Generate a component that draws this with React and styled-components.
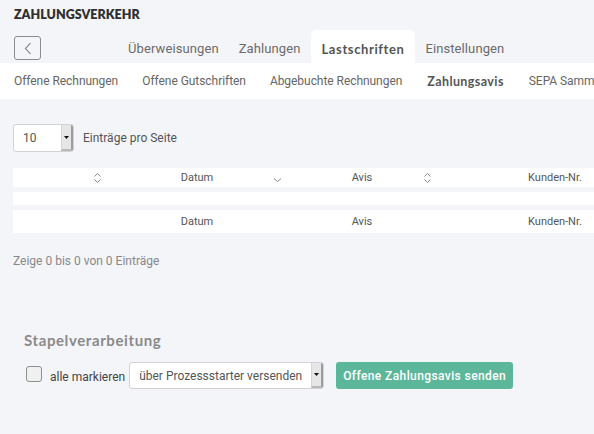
import React from 'react'
import styled, { createGlobalStyle } from 'styled-components'

const GlobalStyle = createGlobalStyle`
    html, body {
        margin: 0;
        padding: 0;
        background: #f4f5f9;
        font-family: Roboto, "Liberation Sans", sans-serif;
        overflow: hidden;
    }
`;

const topTabs = ['Überweisungen', 'Zahlungen', 'Lastschriften', 'Einstellungen'];
const subTabs = ['Offene Rechnungen', 'Offene Gutschriften', 'Abgebuchte Rechnungen', 'Zahlungsavis', 'SEPA Sammellastschriften'];

const columns = [
    { label: '', width: 97, sort: 'both' },
    { label: 'Datum', width: 180, sort: 'desc' },
    { label: 'Avis', width: 150, sort: 'both' },
    { label: 'Kunden-Nr.', width: 230, sort: null },
];

function SortIcon({ type }) {
    if (type === 'desc') {
        return (
            <svg width="9" height="6" viewBox="0 0 9 6" fill="none">
                <path d="M1 1.5L4.5 4.5L8 1.5" stroke="#8a8a8a" strokeWidth="1" />
            </svg>
        )
    }
    return (
        <svg width="9" height="12" viewBox="0 0 9 12" fill="none">
            <path d="M1.5 4.5L4.5 1.5L7.5 4.5" stroke="#8a8a8a" strokeWidth="1" />
            <path d="M1.5 7.5L4.5 10.5L7.5 7.5" stroke="#8a8a8a" strokeWidth="1" />
        </svg>
    )
}

function FakeSelect({ value, width }) {
    return (
        <SelectBox $width={width}>
            <SelectValue>{value}</SelectValue>
            <SelectArrow>
                <svg width="5" height="3" viewBox="0 0 5 3"><path d="M0 0H5L2.5 3Z" fill="#111" /></svg>
            </SelectArrow>
        </SelectBox>
    )
}

export default function App() {
    return (
        <Page>
            <GlobalStyle />
            <Header>
                <Title>ZAHLUNGSVERKEHR</Title>
                <TopRow>
                    <BackButton>
                        <svg width="8" height="13" viewBox="0 0 8 13" fill="none">
                            <path d="M6.5 1L1.5 6.5L6.5 12" stroke="#777" strokeWidth="1.1" />
                        </svg>
                    </BackButton>
                    <Tabs>
                        {topTabs.map(t => (
                            <Tab key={t} $active={t === 'Lastschriften'}>{t}</Tab>
                        ))}
                    </Tabs>
                </TopRow>
            </Header>

            <SubNav>
                {subTabs.map(t => (
                    <SubItem key={t} $active={t === 'Zahlungsavis'}>{t}</SubItem>
                ))}
            </SubNav>

            <Content>
                <LengthRow>
                    <FakeSelect value="10" width={61} />
                    <span>Einträge pro Seite</span>
                </LengthRow>

                <Table>
                    <Row $height={19}>
                        {columns.map((c, i) => (
                            <Cell key={i} $width={c.width} $sortable={!!c.sort}>
                                {c.label}
                                {c.sort && <SortSlot $low={c.sort === 'desc'}><SortIcon type={c.sort} /></SortSlot>}
                            </Cell>
                        ))}
                    </Row>
                    <Row $height={13} />
                    <Row $height={23}>
                        {columns.map((c, i) => (
                            <Cell key={i} $width={c.width} $sortable={!!c.sort}>{c.label}</Cell>
                        ))}
                    </Row>
                </Table>

                <Info>Zeige 0 bis 0 von 0 Einträge</Info>

                <Bulk>
                    <BulkTitle>Stapelverarbeitung</BulkTitle>
                    <BulkRow>
                        <CheckLabel>
                            <CheckBox />
                            alle markieren
                        </CheckLabel>
                        <FakeSelect value="über Prozessstarter versenden" width={195} />
                        <SendButton>Offene Zahlungsavis senden</SendButton>
                    </BulkRow>
                </Bulk>
            </Content>
        </Page>
    )
}

const Page = styled.div`
    width: 594px;
    height: 434px;
    overflow: hidden;
    background: #f4f5f9;
`;

const Header = styled.div`
    padding: 7px 0 0 14px;
`;

const Title = styled.div`
    font-family: Lato, "Open Sans", sans-serif;
    font-weight: 800;
    font-size: 12.5px;
    line-height: 16px;
    color: #2f2f2f;
`;

const TopRow = styled.div`
    display: flex;
    align-items: flex-end;
    height: 33px;
    margin-top: 7px;
`;

const BackButton = styled.div`
    width: 25px;
    height: 22px;
    border: 1px solid #8c8c8c;
    border-radius: 3px;
    display: flex;
    align-items: center;
    justify-content: center;
    align-self: center;
    margin-top: 3px;
    box-sizing: content-box;
`;

const Tabs = styled.div`
    display: flex;
    margin-left: 77px;
    height: 33px;
`;

const Tab = styled.div`
    display: flex;
    align-items: center;
    padding: ${p => p.$active ? '4px 11px 0 11px' : '4px 10px 0 10px'};
    font-family: ${p => p.$active ? 'Lato, "Open Sans", sans-serif' : 'Roboto, sans-serif'};
    font-size: 13px;
    font-weight: ${p => p.$active ? 700 : 400};
    letter-spacing: ${p => p.$active ? '0.6px' : '0.1px'};
    color: ${p => p.$active ? '#555' : '#6b6b6b'};
    background: ${p => p.$active ? '#fff' : 'transparent'};
    border-radius: 5px 5px 0 0;
    white-space: nowrap;
`;

const SubNav = styled.div`
    display: flex;
    align-items: center;
    gap: 24px;
    height: 36px;
    padding: 0 14px;
    background: #fff;
    white-space: nowrap;
    overflow: hidden;
`;

const SubItem = styled.div`
    font-family: ${p => p.$active ? 'Lato, "Open Sans", sans-serif' : 'Roboto, sans-serif'};
    font-size: ${p => p.$active ? '12.5px' : '12px'};
    font-weight: ${p => p.$active ? 700 : 400};
    letter-spacing: ${p => p.$active ? '0.4px' : '-0.05px'};
    margin: ${p => p.$active ? '0 1px' : '0'};
    color: ${p => p.$active ? '#555' : '#666'};
`;

const Content = styled.div`
    padding: 25px 0 0 13px;
`;

const LengthRow = styled.div`
    display: flex;
    align-items: center;
    gap: 9px;
    height: 28px;
    font-size: 12px;
    color: #555;
`;

const SelectBox = styled.div`
    width: ${p => p.$width}px;
    height: 100%;
    box-sizing: border-box;
    display: flex;
    background: #fff;
    border: 1px solid #d2d2d2;
    border-radius: 3px;
    overflow: hidden;
`;

const SelectValue = styled.div`
    flex: 1;
    display: flex;
    align-items: center;
    padding-left: 9px;
    font-size: 12px;
    color: #555;
    white-space: nowrap;
    overflow: hidden;
`;

const SelectArrow = styled.div`
    width: 9px;
    display: flex;
    align-items: center;
    justify-content: center;
    background: #e6e6e6;
    border-left: 1px solid #d6d6d6;
    border-right: 2px solid #9c9c9c;
    border-bottom: 2px solid #b8b8b8;
`;

const Table = styled.div`
    display: flex;
    flex-direction: column;
    gap: 5px;
    margin-top: 16px;
    width: 660px;
`;

const Row = styled.div`
    display: flex;
    height: ${p => p.$height}px;
    background: #fff;
`;

const Cell = styled.div`
    position: relative;
    flex: 0 0 ${p => p.$width}px;
    box-sizing: border-box;
    padding-right: ${p => p.$sortable ? '6px' : '0'};
    display: flex;
    align-items: center;
    justify-content: center;
    font-size: 11px;
    color: #555;
`;

const SortSlot = styled.span`
    position: absolute;
    right: 8px;
    top: ${p => p.$low ? '9px' : '4px'};
    display: flex;
`;

const Info = styled.div`
    margin-top: 21px;
    font-size: 12px;
    line-height: 14px;
    color: #888;
`;

const Bulk = styled.div`
    margin-top: 63px;
    padding-left: 11px;
`;

const BulkTitle = styled.div`
    font-family: Lato, "Open Sans", sans-serif;
    font-weight: 700;
    font-size: 15px;
    letter-spacing: 0.6px;
    line-height: 18px;
    color: #8a8a8a;
`;

const BulkRow = styled.div`
    display: flex;
    align-items: center;
    height: 27px;
    margin-top: 13px;
    padding-left: 2px;
`;

const CheckLabel = styled.label`
    display: flex;
    align-items: center;
    gap: 8px;
    margin-right: 4px;
    font-size: 12px;
    color: #444;
    padding-top: 2px;
`;

const CheckBox = styled.span`
    width: 14px;
    height: 14px;
    border: 1px solid #8f8f8f;
    border-radius: 3px;
    background: #f0f0f0;
    margin-top: -6px;
`;

const SendButton = styled.button`
    margin-left: 12px;
    width: 177px;
    height: 27px;
    border: none;
    border-radius: 3px;
    background: #5cb699;
    color: #fff;
    font-family: Roboto, sans-serif;
    font-weight: 500;
    font-size: 12px;
    letter-spacing: 0.4px;
    padding: 0;
`;
